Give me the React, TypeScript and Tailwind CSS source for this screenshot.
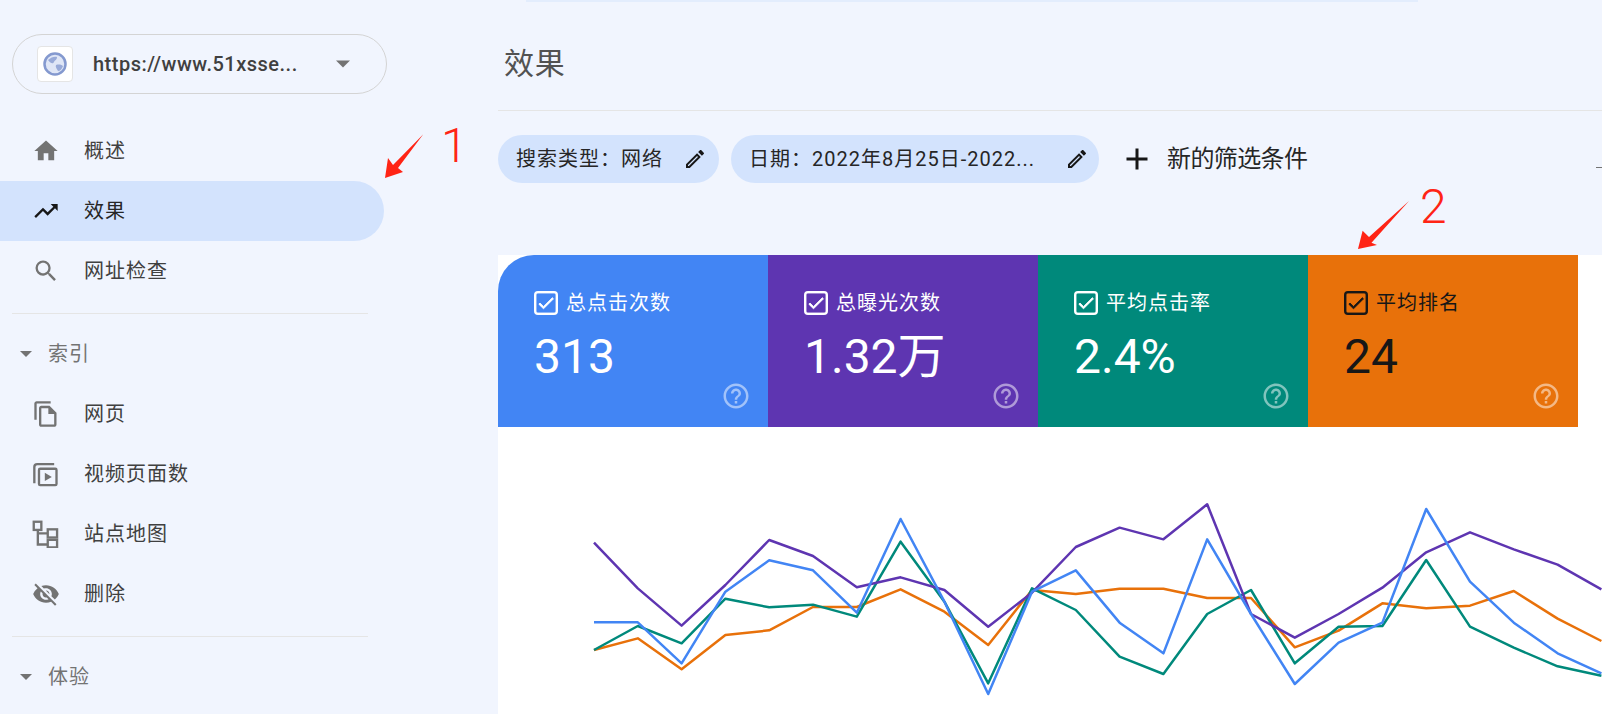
import {
  MdAdd,
  MdCheck,
  MdHelpOutline,
  MdHome,
  MdOutlineEdit,
  MdOutlineFileCopy,
  MdSearch,
  MdTrendingUp,
  MdVisibilityOff,
} from "react-icons/md";
import type { ReactNode } from "react";

const chartX = (i: number) => 96 + 43.8 * i;

const series = [
  {
    color: "#e8710a",
    ys: [540, 505, 598, 495, 481, 411, 411, 358, 425, 525, 360, 372, 356, 356, 384, 384, 532, 482, 400, 415, 407, 363, 446, 513],
  },
  {
    color: "#00897b",
    ys: [540, 468, 520, 386, 412, 404, 440, 215, 395, 640, 355, 420, 560, 612, 432, 360, 580, 470, 468, 270, 470, 533, 589, 617],
  },
  {
    color: "#5e35b1",
    ys: [218, 355, 467, 345, 210, 258, 352, 322, 360, 470, 368, 231, 173, 208, 103, 432, 503, 432, 353, 247, 187, 238, 284, 358],
  },
  {
    color: "#4285f4",
    ys: [457, 457, 580, 365, 271, 301, 428, 147, 395, 672, 365, 301, 458, 550, 208, 432, 642, 518, 458, 117, 335, 458, 550, 610],
  },
];

const cards = [
  { label: "总点击次数", value: "313", bg: "bg-[#4285f4]", fg: "text-white", corner: "rounded-tl-[36px]" },
  { label: "总曝光次数", value: "1.32万", bg: "bg-[#5e35b1]", fg: "text-white", corner: "" },
  { label: "平均点击率", value: "2.4%", bg: "bg-[#00897b]", fg: "text-white", corner: "" },
  { label: "平均排名", value: "24", bg: "bg-[#e8710a]", fg: "text-neutral-900", corner: "" },
];

function Caret({ className }: { className: string }) {
  return (
    <svg viewBox="0 0 14 7" className={className} fill="currentColor">
      <path d="M0 0h14L7 7z" />
    </svg>
  );
}

function VideoPagesIcon() {
  return (
    <svg viewBox="0 0 24 24" className="size-7" fill="none" stroke="currentColor" strokeWidth="2">
      <path d="M2 20V6a2.5 2.5 0 0 1 2.5-2.5H19" />
      <rect x="6" y="7.5" width="15" height="14" rx="1" />
      <path d="M11 11l6 3.5-6 3.5z" fill="currentColor" stroke="none" />
    </svg>
  );
}

function SitemapIcon() {
  return (
    <svg viewBox="0 0 24 24" className="size-7" fill="none" stroke="currentColor" strokeWidth="2">
      <rect x="1.5" y="1.5" width="6.5" height="7" />
      <path d="M5 8.5V21h8M5 11.5h8" />
      <rect x="13.5" y="8" width="8" height="7" />
      <rect x="13.5" y="17" width="8" height="6.5" />
    </svg>
  );
}

function NavRow({ icon, label, active }: { icon: ReactNode; label: string; active?: boolean }) {
  return (
    <div
      className={`flex h-15 items-center gap-6 rounded-r-full pl-8 text-xl tracking-wider ${
        active ? "bg-[#d3e3fd] text-neutral-800" : "text-neutral-700"
      }`}
    >
      <span className={active ? "text-neutral-900" : "text-neutral-500"}>{icon}</span>
      <span>{label}</span>
    </div>
  );
}

function SectionHead({ label }: { label: string }) {
  return (
    <div className="mt-5 flex h-10 items-center gap-4 pl-5 text-xl tracking-wider text-neutral-500">
      <Caret className="h-1.5 w-3 text-neutral-500" />
      <span>{label}</span>
    </div>
  );
}

function Sidebar() {
  return (
    <aside className="w-[498px] shrink-0 pt-8.5">
      <div className="ml-3 flex h-15 w-[375px] items-center gap-5 rounded-full border border-neutral-300 pl-6 pr-9">
        <div className="flex size-9 shrink-0 items-center justify-center rounded-sm border border-neutral-200 bg-white">
          <svg viewBox="0 0 24 24" className="size-6">
            <circle cx="12" cy="12" r="10.5" fill="#dfe6f6" stroke="#8499cf" strokeWidth="2.5" />
            <path d="M5 8c3-3 7-4 9-3 0 3-2 3-3 5s-3 2-6-2zM13 13c3-1 6 0 7 1-1 3-3 5-5 5-1-2-3-4-2-6z" fill="#98aad8" />
          </svg>
        </div>
        <span className="flex-1 text-xl font-medium tracking-wide text-neutral-700">https://www.51xsse...</span>
        <Caret className="h-2 w-3.5 text-neutral-500" />
      </div>

      <nav className="mt-6.75 w-96">
        <NavRow icon={<MdHome className="size-7" />} label="概述" />
        <NavRow icon={<MdTrendingUp className="size-7" />} label="效果" active />
        <NavRow icon={<MdSearch className="size-7" />} label="网址检查" />
        <div className="ml-3 mr-4 mt-3 border-t border-neutral-200" />
        <SectionHead label="索引" />
        <div className="mt-2.5">
          <NavRow icon={<MdOutlineFileCopy className="size-7" />} label="网页" />
          <NavRow icon={<VideoPagesIcon />} label="视频页面数" />
          <NavRow icon={<SitemapIcon />} label="站点地图" />
          <NavRow icon={<MdVisibilityOff className="size-7" />} label="删除" />
        </div>
        <div className="ml-3 mr-4 mt-3 border-t border-neutral-200" />
        <SectionHead label="体验" />
      </nav>
    </aside>
  );
}

function MetricCard({ label, value, bg, fg, corner }: (typeof cards)[number]) {
  const isDark = fg === "text-neutral-900";
  return (
    <div className={`flex w-[270px] flex-col pb-4 pl-9 pr-4 pt-8.5 ${bg} ${fg} ${corner}`}>
      <div className="flex items-center gap-2">
        <span
          className={`flex size-6 items-center justify-center rounded-sm border-2 ${
            isDark ? "border-neutral-900" : "border-white"
          }`}
        >
          <MdCheck className="size-5 stroke-1" />
        </span>
        <span className="text-xl tracking-wider">{label}</span>
      </div>
      <div className="mt-4 text-5xl leading-none">{value}</div>
      <MdHelpOutline className="mt-auto size-8 self-end text-white/50" />
    </div>
  );
}

function Chart() {
  return (
    <svg viewBox="0 0 1104 287" className="w-full flex-1" preserveAspectRatio="xMinYMin slice" fill="none">
      {series.map((s) => (
        <polyline
          key={s.color}
          stroke={s.color}
          strokeWidth="2.5"
          strokeLinejoin="round"
          points={s.ys.map((y, i) => `${chartX(i)},${y / 3 + 43}`).join(" ")}
        />
      ))}
    </svg>
  );
}

function Main() {
  return (
    <main className="flex min-w-0 flex-1 flex-col">
      <div className="ml-7 h-0.5 w-[892px] bg-[#e3edfd]" />
      <div className="border-b border-neutral-200 pb-7 pl-1.5 pt-11 text-3xl tracking-wide text-neutral-600">效果</div>

      <div className="mt-6 flex h-12 items-center text-xl text-neutral-800">
        <div className="flex h-12 items-center gap-5 rounded-full bg-[#d3e3fd] pl-4.5 pr-3">
          <span className="tracking-wider">搜索类型：网络</span>
          <MdOutlineEdit className="size-6 text-neutral-900" />
        </div>
        <div className="ml-3 flex h-12 w-92 items-center justify-between rounded-full bg-[#d3e3fd] pl-4.5 pr-2.5">
          <span className="tracking-wider">日期：2022年8月25日-2022...</span>
          <MdOutlineEdit className="size-6 text-neutral-900" />
        </div>
        <div className="ml-5 flex items-center gap-3">
          <MdAdd className="size-9 text-neutral-900" />
          <span className="text-2xl tracking-tight">新的筛选条件</span>
        </div>
        <div className="ml-auto mt-4 h-px w-1.5 bg-neutral-500" />
      </div>

      <section className="mt-18 flex flex-1 flex-col bg-white">
        <div className="flex h-43">
          {cards.map((c) => (
            <MetricCard key={c.label} {...c} />
          ))}
        </div>
        <Chart />
      </section>
    </main>
  );
}

export default function App() {
  return (
    <div className="relative flex h-screen overflow-hidden bg-[#f1f5fe] font-['Roboto','Noto_Sans_CJK_SC',sans-serif]">
      <Sidebar />
      <Main />

      <svg viewBox="0 0 1602 714" className="pointer-events-none absolute inset-0 size-full" fill="#ff2415">
        <polygon points="423.3,134.3 393,165 388,158 385,178 403,172 398,168" />
        <polygon points="1409,201 1369,237 1362.6,230.7 1358,249 1377,245 1371.5,242.7" />
      </svg>
      <span className="absolute left-[441px] top-[122px] text-5xl font-light text-[#ff2415]">1</span>
      <span className="absolute left-[1420px] top-[183px] text-5xl font-light text-[#ff2415]">2</span>
    </div>
  );
}
